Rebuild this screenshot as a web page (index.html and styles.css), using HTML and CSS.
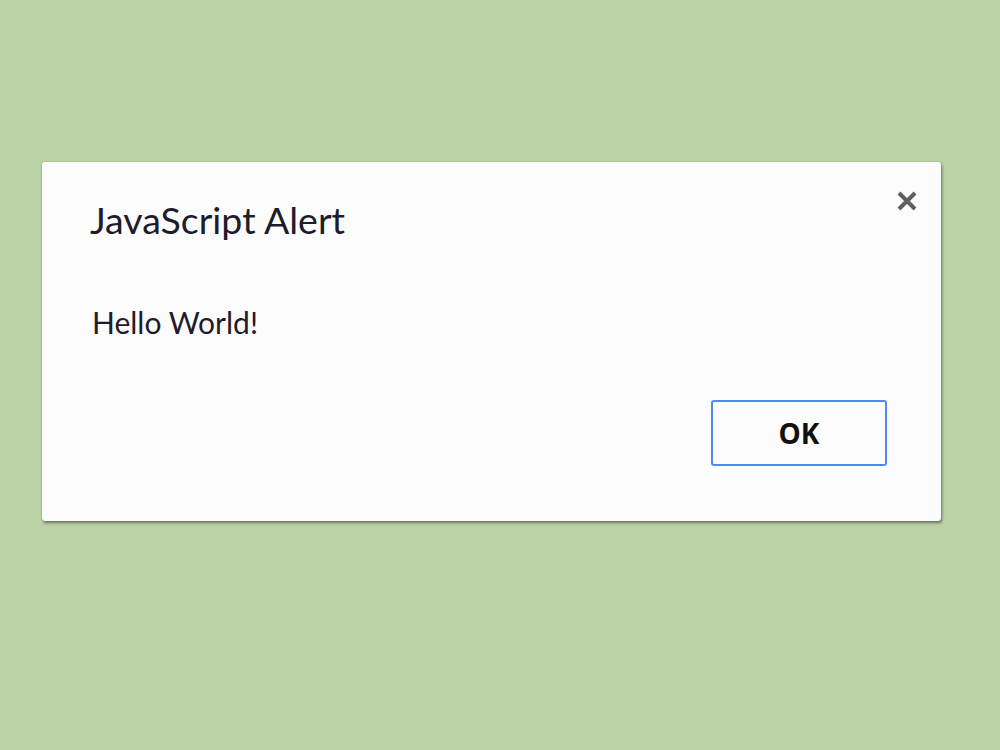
FILE: index.html
```html
<!DOCTYPE html>
<html>
<head>
<meta charset="utf-8">
<link rel="stylesheet" href="styles.css">
</head>
<body>
<div class="dialog">
  <div class="header">
    <h1 class="title">JavaScript Alert</h1>
    <button class="close" aria-label="Close">
      <svg width="22" height="22" viewBox="0 0 22 22"><path d="M3 3 L19 19 M19 3 L3 19" stroke="#5f5f5f" stroke-width="4" stroke-linecap="butt"/></svg>
    </button>
  </div>
  <p class="message">Hello World!</p>
  <div class="actions">
    <button class="ok">OK</button>
  </div>
</div>
</body>
</html>
```

FILE: styles.css
```css
html, body {
  margin: 0;
  padding: 0;
  background: #bbd1a6;
  width: 1000px;
  height: 750px;
  overflow: hidden;
}
body {
  padding: 162px 0 0 42px;
  box-sizing: border-box;
  font-family: Lato, "Open Sans", sans-serif;
}
.dialog {
  width: 899px;
  height: 359px;
  background: #fcfcfc;
  border-radius: 3px;
  box-shadow: 1px 2px 3px rgba(0,0,0,0.45), 0 0 1px rgba(0,0,0,0.3);
  box-sizing: border-box;
  padding: 0 54px 0 48px;
  display: flex;
  flex-direction: column;
}
.header {
  display: flex;
  justify-content: space-between;
  align-items: flex-start;
  height: 100px;
  margin-right: -31px;
}
.title {
  margin: 36px 0 0 0;
  font-weight: normal;
  font-size: 37.5px;
  line-height: 44px;
  color: #1c1c2a;
}
.close {
  margin-top: 28px;
  padding: 0;
  border: 0;
  background: none;
  width: 22px;
  height: 22px;
}
.close svg { display: block; }
.message {
  margin: 42px 0 0 2px;
  font-size: 30px;
  line-height: 36px;
  color: #221b2a;
}
.actions {
  display: flex;
  justify-content: flex-end;
  margin-top: 60px;
}
.ok {
  width: 176px;
  height: 66px;
  border: 2px solid #5089f0;
  border-radius: 3px;
  background: #fcfcfc;
  font-family: "Open Sans", Lato, sans-serif;
  font-weight: bold;
  font-size: 28px;
  color: #111;
  padding: 0;
}
```
